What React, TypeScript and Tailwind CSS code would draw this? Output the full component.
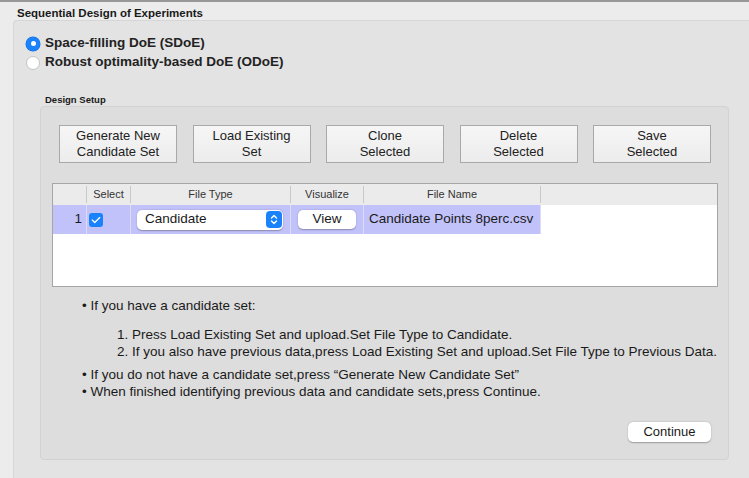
import { FaCheck } from "react-icons/fa6";

const actions = [
  ["Generate New", "Candidate Set"],
  ["Load Existing", "Set"],
  ["Clone", "Selected"],
  ["Delete", "Selected"],
  ["Save", "Selected"],
];

const Radio = ({ checked, label }: { checked?: boolean; label: string }) => (
  <div className="flex items-center gap-[5px] h-[19px]">
    {checked ? (
      <div className="w-[14px] h-[14px] rounded-full bg-[#1a82fb] flex items-center justify-center shadow-[0_0_0_0.5px_#1670d8]">
        <div className="w-[5px] h-[5px] rounded-full bg-white" />
      </div>
    ) : (
      <div className="w-[14px] h-[14px] rounded-full bg-white border border-[#c4c4c4]" />
    )}
    <span className="text-[13.5px] font-bold text-[#222]">{label}</span>
  </div>
);

const Stepper = () => (
  <div className="w-[16px] h-[17px] rounded-[4px] bg-[#1a82fb] flex items-center justify-center">
    <svg width="8" height="11" viewBox="0 0 8 11" fill="none" stroke="white" strokeWidth="1.4" strokeLinecap="round" strokeLinejoin="round">
      <path d="M1.5 4 L4 1.5 L6.5 4" />
      <path d="M1.5 7 L4 9.5 L6.5 7" />
    </svg>
  </div>
);

const App = () => {
  return (
    <div className="w-[749px] h-[478px] overflow-hidden bg-[#ececec] border-t-2 border-[#979797] font-['Liberation_Sans',Arial,sans-serif] text-[#1f1f1f]">
      <div className="h-[18px] pl-[17px] pt-[4px] leading-[14px] text-[11.5px] font-bold text-[#1a1a1a]">
        Sequential Design of Experiments
      </div>

      <div className="ml-[13px] h-[470px] bg-[#e3e3e3] border-t border-l border-[#d6d6d6] rounded-tl-[4px] pl-[12px] pt-[13px]">
        <div className="flex flex-col">
          <Radio checked label="Space-filling DoE (SDoE)" />
          <Radio label="Robust optimality-based DoE (ODoE)" />
        </div>

        <div className="mt-[22px] pl-[19px] text-[9.5px] font-bold text-[#1a1a1a] h-[12px] leading-[12px]">
          Design Setup
        </div>

        <div className="ml-[14px] w-[689px] h-[354px] bg-[#dddddd] border border-[#d2d2d2] rounded-[4px] pt-[18px] px-[11px]">
          <div className="flex gap-[15.5px] pl-[7px]">
            {actions.map((a) => (
              <button
                key={a[0]}
                className="w-[118px] h-[38px] bg-gradient-to-b from-[#f6f6f6] to-[#ececec] border border-[#a9a9a9] text-[13px] leading-[16px] text-[#222] flex flex-col items-center justify-center"
              >
                <span>{a[0]}</span>
                <span>{a[1]}</span>
              </button>
            ))}
          </div>

          <div className="mt-[20px] w-[666px] h-[104px] bg-white border border-[#a6a6a6]">
            <div className="grid grid-cols-[34px_44px_160px_73px_177px_1fr] h-[21px] bg-[#ebebeb] text-[11px] text-[#333]">
              <div className="my-[2px] border-r border-[#c9c9c9]" />
              <div className="my-[2px] border-r border-[#c9c9c9] flex items-center justify-center">Select</div>
              <div className="my-[2px] border-r border-[#c9c9c9] flex items-center justify-center">File Type</div>
              <div className="my-[2px] border-r border-[#c9c9c9] flex items-center justify-center">Visualize</div>
              <div className="my-[2px] border-r border-[#c9c9c9] flex items-center justify-center">File Name</div>
              <div />
            </div>
            <div className="grid grid-cols-[34px_44px_160px_73px_177px_1fr] h-[29px] text-[13.5px] text-[#1a1a1a]">
              <div className="bg-[#c2c2fa] border-r border-[#dcdcf8] flex items-center justify-end pr-[4px]">1</div>
              <div className="bg-[#c2c2fa] border-r border-[#dcdcf8] flex items-center pl-[2px]">
                <div className="w-[14px] h-[14px] rounded-[3px] bg-[#1a82fb] flex items-center justify-center">
                  <FaCheck className="text-white w-[10px] h-[10px]" />
                </div>
              </div>
              <div className="bg-[#c2c2fa] border-r border-[#dcdcf8] flex items-center pl-[6px]">
                <div className="w-[146px] h-[20px] bg-white rounded-[5px] shadow-[0_0.5px_1.5px_rgba(0,0,0,0.3)] flex items-center justify-between pl-[8px] pr-[1px]">
                  <span>Candidate</span>
                  <Stepper />
                </div>
              </div>
              <div className="bg-[#c2c2fa] border-r border-[#dcdcf8] flex items-center pl-[7px]">
                <div className="w-[58px] h-[19px] bg-white rounded-[5px] shadow-[0_0.5px_1.5px_rgba(0,0,0,0.3)] flex items-center justify-center">
                  View
                </div>
              </div>
              <div className="bg-[#c2c2fa] border-r border-[#dcdcf8] flex items-center pl-[5px]">
                Candidate Points 8perc.csv
              </div>
              <div />
            </div>
          </div>

          <div className="mt-[10px] pl-[30px] text-[13.5px] leading-[17px] text-[#1a1a1a] whitespace-nowrap">
            <div className="h-[17px]">• If you have a candidate set:</div>
            <div className="mt-[12px] pl-[35px]">
              <div>1. Press Load Existing Set and upload.Set File Type to Candidate.</div>
              <div>2. If you also have previous data,press Load Existing Set and upload.Set File Type to Previous Data.</div>
            </div>
            <div className="mt-[6px]">
              <div>• If you do not have a candidate set,press “Generate New Candidate Set”</div>
              <div>• When finished identifying previous data and candidate sets,press Continue.</div>
            </div>
          </div>

          <div className="flex justify-end mt-[22px] pr-[6px]">
            <button className="w-[83px] h-[20px] bg-white rounded-[5px] shadow-[0_0.5px_1.5px_rgba(0,0,0,0.3)] text-[13px] text-[#1a1a1a]">
              Continue
            </button>
          </div>
        </div>
      </div>
    </div>
  );
};

export default App;
